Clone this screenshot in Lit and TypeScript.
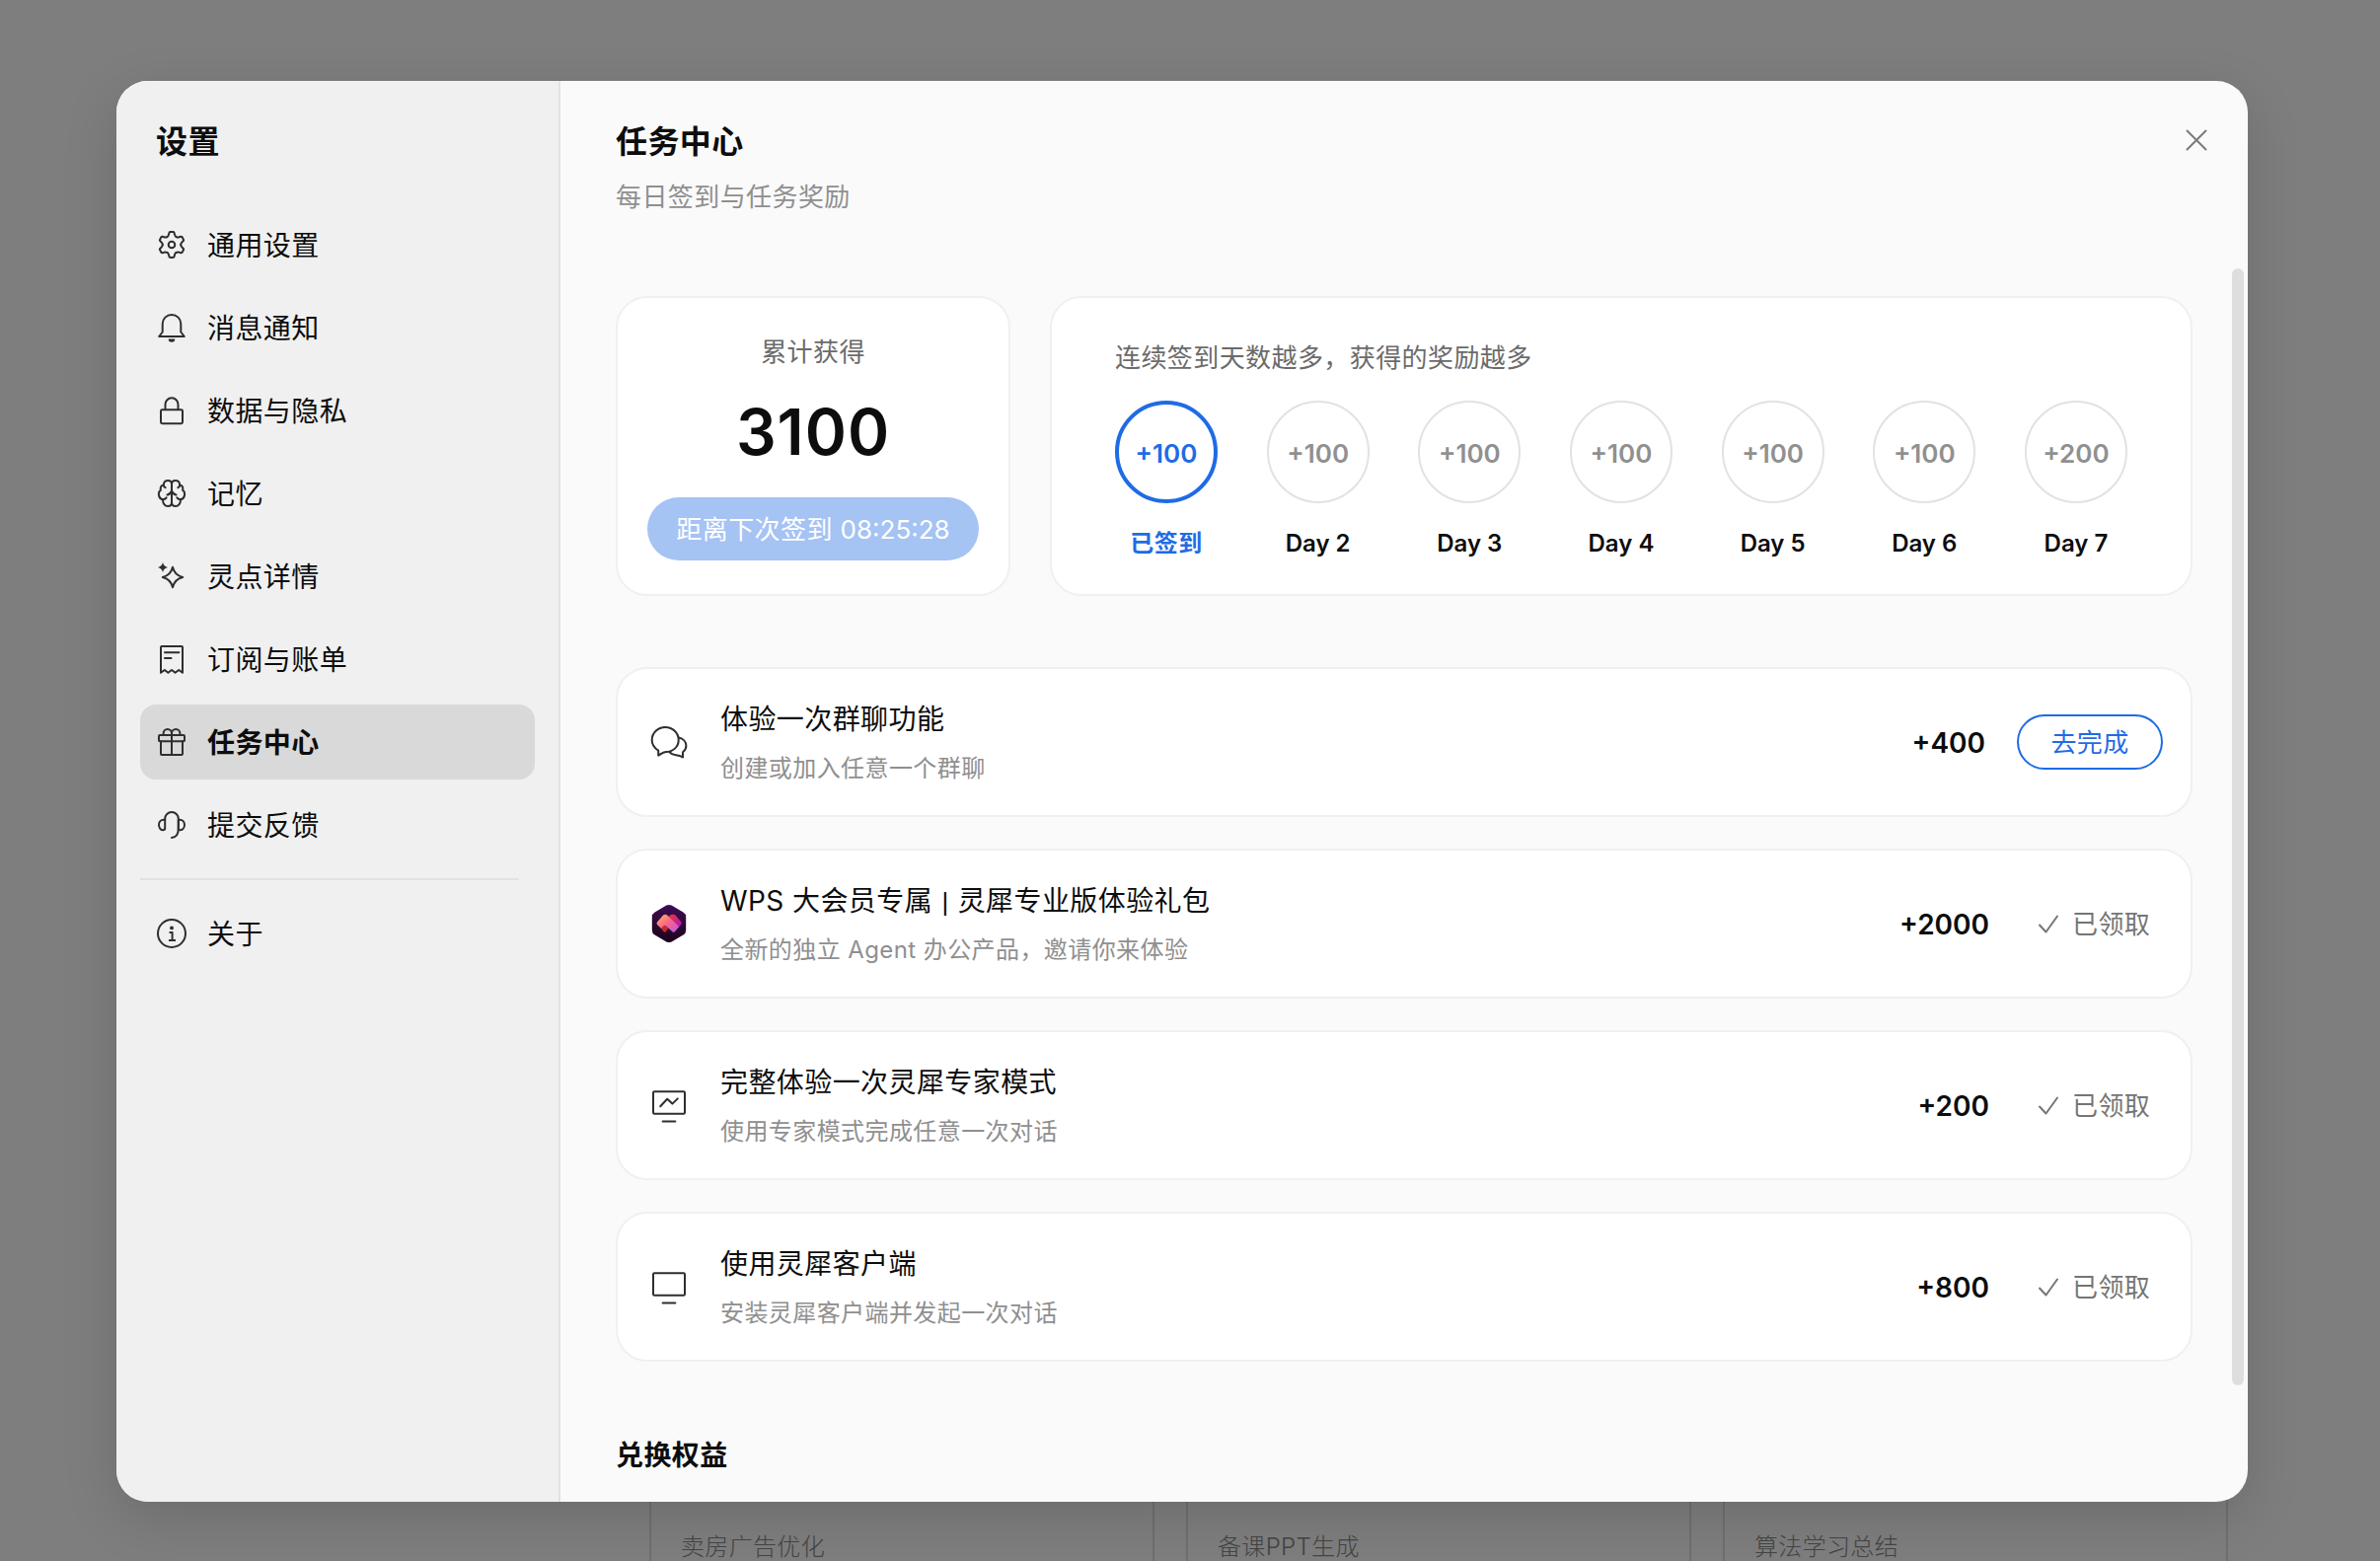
import { LitElement, html, svg, css, nothing } from "lit";
import type { TemplateResult } from "lit";
import { customElement, property } from "lit/decorators.js";
import { classMap } from "lit/directives/class-map.js";

const toothPath =
  "M-4.6 -7.97Q-3.3 -8.7 -2.9 -10.6L-2.5 -12.2Q-2.2 -13 -1.3 -13H1.3Q2.2 -13 2.5 -12.2L2.9 -10.6Q3.3 -8.7 4.6 -7.97";

const brainHalf = svg`
  <path d="M16 6.5C16 4.2 14.4 3 12.3 3C9.8 3 8 4.8 7.8 7.2C5.2 7.8 4.2 10.2 4.9 12.6C3.2 13.8 2.6 15.8 3 18C3.4 20.4 5 21.9 7 22.2C6.9 26.2 9 29 12.2 29C14.6 29 16 27.4 16 25"/>
  <path d="M7.8 7.2C7.8 8.6 8.4 9.6 9.6 10.2M7 22.2C8.6 22.2 9.8 21.6 10.6 20.4M16 13.5C15 15.8 13.6 17.2 11.4 17.6"/>`;

const icons: Record<string, TemplateResult> = {
  gear: svg`<g transform="translate(16 16)">
      ${[0, 60, 120, 180, 240, 300].map((a) => svg`<path transform="rotate(${a})" d=${toothPath}/>`)}
      <circle r="3.3"/></g>`,
  bell: svg`<path d="M6.7 20.5V12.2a9.3 9.3 0 0 1 18.6 0V20.5L28.8 25H3.2Z"/>
    <path class="solid" d="M12.7 27.6h6.6a3.3 3.2 0 0 1-6.6 0Z"/>`,
  lock: svg`<rect x="5" y="15.2" width="22" height="14" rx="1.4"/><path d="M9.5 15V10a6.5 6.7 0 0 1 13 0V15"/>`,
  brain: svg`<path d="M16 6V26"/>${brainHalf}<g transform="matrix(-1 0 0 1 32 0)">${brainHalf}</g>`,
  spark: svg`<path d="M17 6.8C18.4 12.6 21.4 15.6 27.2 17C21.4 18.4 18.4 21.4 17 27.2C15.6 21.4 12.6 18.4 6.8 17C12.6 15.6 15.6 12.6 17 6.8Z"/>
    <path class="solid" d="M7 2C7.8 4.9 9.1 6.2 12 7C9.1 7.8 7.8 9.1 7 12C6.2 9.1 4.9 7.8 2 7C4.9 6.2 6.2 4.9 7 2Z"/>`,
  receipt: svg`<path d="M5 29.8V4a1 1 0 0 1 1-1H26a1 1 0 0 1 1 1V29.8L23.2 27L19.6 29.8L16 27L12.4 29.8L8.8 27Z"/>
    <path d="M9 9.2H23.4M9 15H15.5"/>`,
  gift: svg`<rect x="3" y="9" width="26" height="6.2" rx="1"/><path d="M5 15.2V28a1 1 0 0 0 1 1H26a1 1 0 0 0 1-1V15.2M16 9V29M7.6 9V7.2a4.2 4.2 0 0 1 8.4 0V9M16 9V7.2a4.2 4.2 0 0 1 8.4 0V9"/>`,
  headset: svg`<path d="M9.2 10.8V9.8a6.8 6.8 0 0 1 13.6 0V20C22.8 25.4 20.6 28.6 16 29"/>
    <path d="M9.2 10.8H8C5 10.8 3 13 3 16S5 21.3 7.2 21.3C8.6 21.3 9.2 20.8 9.2 19.6ZM22.8 10.8H24C27 10.8 29 13 29 16S27 21.3 24 21.3H22.8Z"/>`,
  info: svg`<circle cx="16" cy="16" r="14"/><circle class="solid" cx="16" cy="10.4" r="1.9"/>
    <path d="M13.6 15H16.6V22.8M13 22.9H20" stroke-linecap="butt"/>`,
  close: svg`<path d="M6.5 6.5L25.5 25.5M25.5 6.5L6.5 25.5"/>`,
  check: svg`<path d="M3 13.5L9.5 20.5L21 4.5"/>`,
  chat: svg`<path d="M9.2 33.6V28.6C5 26 2.7 22 2.7 18C2.7 10.8 8.8 5 16.2 5C23.7 5 29.7 10.8 29.7 18C29.7 25 24 30 17 30C14 30.2 11.5 32.2 9.2 33.6Z"/>
    <path d="M29.8 15.5C34.5 16.5 37.4 20 37.4 23.8C37.4 26.5 36.2 28.6 34 30.2V35.4C31.5 34 30 33.6 27 33.2C24 32.8 22 31.8 20.5 30.2"/>`,
  monitor: svg`<rect x="4" y="6.3" width="32" height="22.4" rx="1.2"/><path d="M13.6 36.4H26.4"/>`,
  chart: svg`<rect x="4" y="6.3" width="32" height="22.4" rx="1.2"/><path d="M13.6 36.4H26.4M11.2 21.3L18.2 13.8L23.4 18.6L28.8 13.4"/>`,
  logo: svg`<defs>
      <linearGradient id="hex" x1="0.5" y1="0" x2="0.4" y2="1"><stop offset="0" stop-color="#3d0d55"/><stop offset="1" stop-color="#1c0318"/></linearGradient>
      <linearGradient id="front" x1="0" y1="0" x2="1" y2="1"><stop offset="0.1" stop-color="#ffa66a"/><stop offset="0.5" stop-color="#f7648c"/><stop offset="1" stop-color="#b558f0"/></linearGradient>
      <linearGradient id="back" x1="0" y1="0" x2="1" y2="1"><stop offset="0" stop-color="#e8392f"/><stop offset="1" stop-color="#b512c8"/></linearGradient>
    </defs>
    <path d="M17.4 1.6Q20 .2 22.6 1.6L34.4 8.4Q37.2 10 37.2 13.2V26.8Q37.2 30 34.4 31.6L22.6 38.4Q20 39.8 17.4 38.4L5.6 31.6Q2.8 30 2.8 26.8V13.2Q2.8 10 5.6 8.4Z" fill="url(#hex)" stroke="none"/>
    <path d="M19.5 13L21 11.6Q22 10.8 23.4 10.8H24.6Q26 10.8 27 11.9L32.2 18.2Q33.2 19.6 32.2 21L29.6 24Z" fill="url(#back)" stroke="none"/>
    <path d="M11 23.6L15.8 20.6L19.4 24.6L16.8 28.2Q15.7 29.4 14.6 28.2Z" fill="#c52a2e" stroke="none"/>
    <path d="M8 18.6L13.6 12Q14.6 10.8 16.2 10.8Q17.8 10.8 18.8 12L30.2 23.2L25.8 28.2Q24.6 29.4 23.4 28.2L17.2 22.4Q15.6 21 14.2 22.6L12 25L8 21Q7 19.8 8 18.6Z" fill="url(#front)" stroke="none"/>`,
};

@customElement("ui-icon")
export class UiIcon extends LitElement {
  @property() name = "";
  @property({ type: Number }) box = 32;

  static styles = css`
    :host { display: block; flex: none; }
    svg { display: block; width: 100%; height: 100%; fill: none; stroke: currentColor; stroke-width: 2; stroke-linecap: round; stroke-linejoin: round; }
    .solid { fill: currentColor; stroke: none; }
  `;

  render() {
    return html`<svg viewBox="0 0 ${this.box} ${this.box}" aria-hidden="true">${icons[this.name] ?? nothing}</svg>`;
  }
}

const navItems = [
  { icon: "gear", label: "通用设置" },
  { icon: "bell", label: "消息通知" },
  { icon: "lock", label: "数据与隐私" },
  { icon: "brain", label: "记忆" },
  { icon: "spark", label: "灵点详情" },
  { icon: "receipt", label: "订阅与账单" },
  { icon: "gift", label: "任务中心", active: true },
  { icon: "headset", label: "提交反馈" },
];

const days = [
  { reward: "+100", label: "已签到", done: true },
  { reward: "+100", label: "Day 2" },
  { reward: "+100", label: "Day 3" },
  { reward: "+100", label: "Day 4" },
  { reward: "+100", label: "Day 5" },
  { reward: "+100", label: "Day 6" },
  { reward: "+200", label: "Day 7" },
];

const tasks = [
  { icon: "chat", title: html`体验一次群聊功能`, desc: "创建或加入任意一个群聊", reward: "+400", open: true },
  {
    icon: "logo",
    title: html`WPS 大会员专属 <span class="bar">|</span> 灵犀专业版体验礼包`,
    desc: "全新的独立 Agent 办公产品，邀请你来体验",
    reward: "+2000",
  },
  { icon: "chart", title: html`完整体验一次灵犀专家模式`, desc: "使用专家模式完成任意一次对话", reward: "+200" },
  { icon: "monitor", title: html`使用灵犀客户端`, desc: "安装灵犀客户端并发起一次对话", reward: "+800" },
];

@customElement("app-root")
export class AppRoot extends LitElement {
  static styles = css`
    :host {
      display: block; position: relative; width: 100vw; height: 100vh; overflow: hidden;
      background: #7e7e7e; color: #0d0d0d;
      font-family: Inter, "Noto Sans CJK SC", sans-serif; letter-spacing: 0.026em;
    }
    * { box-sizing: border-box; }

    .backdrop { height: 100%; padding: 0 154px 0 658px; display: grid; grid-template-columns: repeat(3, 512px); gap: 32px; align-items: end; overflow: hidden; }
    .template { height: 200px; border: 2px solid #6f6f6f; border-width: 0 2px; padding: 169px 30px 0; font-size: 24px; line-height: 33px; letter-spacing: 0.014em; font-weight: 300; color: #444; }

    .overlay { position: absolute; inset: 0; padding: 82px 134px 60px 118px; display: flex; }
    .modal { position: relative; flex: 1; display: flex; border-radius: 32px; overflow: hidden; background: #fafafa; }
    .shade { flex: 1; display: flex; border-radius: 32px; box-shadow: 0 16px 56px rgba(0, 0, 0, 0.14); }

    .sidebar { width: 450px; flex: none; background: #f0f0f0; border-right: 2px solid #e2e2e2; padding: 36px 24px; }
    .heading { font-size: 32px; line-height: 51px; font-weight: 600; }
    .sidebar .heading { padding-left: 16px; margin-bottom: 41px; }
    .nav { display: flex; flex-direction: column; gap: 8px; }
    .item { width: 400px; height: 76px; border-radius: 16px; padding: 0 16px; display: flex; align-items: center; gap: 20px; font-size: 28px; line-height: 40px; }
    .item span { padding-top: 2px; }
    .item ui-icon { width: 32px; height: 32px; color: #2e2e2e; }
    .item.active { background: #d9d9d9; font-weight: 600; }
    .rule { width: 384px; height: 2px; background: #e2e2e2; margin: 16px 0; }

    .main { flex: 1; min-width: 0; padding: 36px 56px 0; display: flex; flex-direction: column; }
    .top { display: flex; justify-content: space-between; }
    .close { width: 32px; height: 32px; margin: 8px -20px 0 0; color: #7a7a7a; }
    .sub { font-size: 26px; line-height: 36px; color: #8f8f8f; margin-top: 13px; }

    .summary { display: flex; gap: 40px; margin-top: 82px; height: 304px; flex: none; }
    .card { background: #fff; border: 2px solid #f0f0f0; border-radius: 32px; }
    .total { width: 400px; flex: none; padding-top: 37px; display: flex; flex-direction: column; align-items: center; }
    .caption { font-size: 26px; line-height: 36px; color: #6b6b6b; }
    .amount { font-size: 64px; line-height: 73px; font-weight: 600; letter-spacing: 1px; margin: 26px 0 30px; }
    .pill { width: 336px; height: 64px; border-radius: 32px; background: #a5c3f3; color: #fff; font-size: 26px; line-height: 66px; text-align: center; white-space: nowrap; }
    .time { letter-spacing: 0; }
    .streak { flex: 1; padding: 43px 64px 0; }
    .days { display: flex; justify-content: space-between; margin-top: 25px; }
    .day { width: 104px; display: flex; flex-direction: column; align-items: center; gap: 24px; font-size: 24px; line-height: 33px; font-weight: 600; letter-spacing: 0; white-space: nowrap; }
    .coin { width: 104px; height: 104px; border: 2px solid #e2e2e2; border-radius: 50%; padding-top: 2px; display: flex; align-items: center; justify-content: center; font-size: 26px; color: #909090; }
    .day.done { color: #1f6be6; letter-spacing: 0.5px; }
    .day.done .coin { border: 4px solid #1f6be6; color: #1f6be6; letter-spacing: 0; }

    .tasks { display: flex; flex-direction: column; gap: 32px; margin-top: 72px; }
    .task { height: 152px; display: flex; align-items: center; padding: 0 28px 0 32px; }
    .task > ui-icon { width: 40px; height: 40px; color: #2e2e2e; }
    .text { flex: 1; margin-left: 32px; padding-top: 1px; display: flex; flex-direction: column; gap: 12px; }
    .name { height: 41px; font-size: 28px; line-height: 41px; }
    .bar { display: inline-block; width: 9px; font: 26px/30px "Liberation Sans", sans-serif; text-align: center; letter-spacing: 0; }
    .desc { font-size: 24px; line-height: 34px; color: #8f8f8f; padding-bottom: 1px; }
    .reward { font-size: 28px; line-height: 40px; padding-top: 1px; font-weight: 600; letter-spacing: 0; }
    .go { width: 148px; height: 56px; margin-left: 32px; border: 2px solid #1f6be6; border-radius: 28px; color: #1f6be6; font-size: 26px; line-height: 54px; text-align: center; }
    .got { width: 176px; padding: 2px 0 0 48px; display: flex; align-items: center; gap: 12px; font-size: 26px; line-height: 36px; color: #757575; white-space: nowrap; }
    .got ui-icon { width: 24px; height: 24px; margin-top: -2px; }
    .benefits { font-size: 28px; line-height: 40px; font-weight: 600; margin-top: 75px; }

    .thumb { position: absolute; right: 4px; top: 190px; width: 12px; height: 1132px; border-radius: 6px; background: #dedede; }
  `;

  private renderItem(item: { icon: string; label: string; active?: boolean }) {
    return html`<div class=${classMap({ item: true, active: !!item.active })}>
      <ui-icon name=${item.icon}></ui-icon><span>${item.label}</span>
    </div>`;
  }

  render() {
    return html`
      <div class="backdrop">
        <div class="template">卖房广告优化</div>
        <div class="template">备课PPT生成</div>
        <div class="template">算法学习总结</div>
      </div>
      <div class="overlay">
        <div class="shade">
          <div class="modal">
            <aside class="sidebar">
              <div class="heading">设置</div>
              <nav class="nav">${navItems.map((i) => this.renderItem(i))}</nav>
              <div class="rule"></div>
              ${this.renderItem({ icon: "info", label: "关于" })}
            </aside>
            <main class="main">
              <header class="top">
                <div>
                  <div class="heading">任务中心</div>
                  <div class="sub">每日签到与任务奖励</div>
                </div>
                <ui-icon class="close" name="close"></ui-icon>
              </header>
              <section class="summary">
                <div class="card total">
                  <div class="caption">累计获得</div>
                  <div class="amount">3100</div>
                  <div class="pill">距离下次签到 <span class="time">08:25:28</span></div>
                </div>
                <div class="card streak">
                  <div class="caption">连续签到天数越多，获得的奖励越多</div>
                  <div class="days">
                    ${days.map(
                      (d) => html`<div class=${classMap({ day: true, done: !!d.done })}>
                        <div class="coin">${d.reward}</div>
                        <div>${d.label}</div>
                      </div>`,
                    )}
                  </div>
                </div>
              </section>
              <section class="tasks">
                ${tasks.map(
                  (t) => html`<div class="card task">
                    <ui-icon name=${t.icon} .box=${40}></ui-icon>
                    <div class="text">
                      <div class="name">${t.title}</div>
                      <div class="desc">${t.desc}</div>
                    </div>
                    <div class="reward">${t.reward}</div>
                    ${t.open
                      ? html`<div class="go">去完成</div>`
                      : html`<div class="got"><ui-icon name="check" .box=${24}></ui-icon>已领取</div>`}
                  </div>`,
                )}
              </section>
              <div class="benefits">兑换权益</div>
            </main>
            <div class="thumb"></div>
          </div>
        </div>
      </div>
    `;
  }
}
